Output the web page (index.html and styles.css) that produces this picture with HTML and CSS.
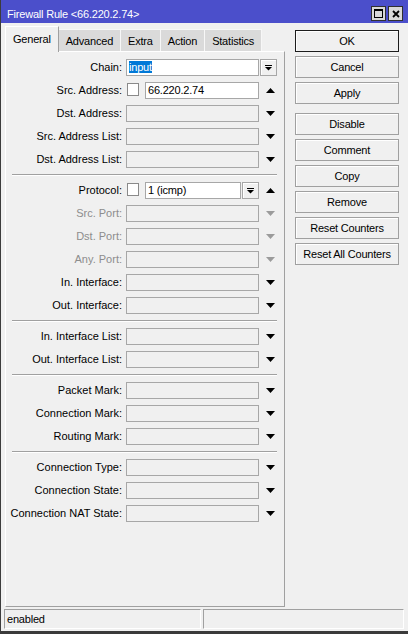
FILE: index.html
```html
<!DOCTYPE html>
<html>
<head>
<meta charset="utf-8">
<title>Firewall Rule</title>
<link rel="stylesheet" href="styles.css">
</head>
<body>
<div class="window">
  <div class="titlebar">
    <span class="title">Firewall Rule &lt;66.220.2.74&gt;</span>
    <div class="tbtns">
      <span class="tbtn"><svg width="9" height="9" viewBox="0 0 9 9"><rect x="0.5" y="0.5" width="8" height="8" fill="none" stroke="#000"/><rect x="0" y="0" width="9" height="2" fill="#000"/></svg></span>
      <span class="tbtn"><svg width="8" height="8" viewBox="0 0 8 8"><path d="M1 1L7 7M7 1L1 7" stroke="#000" stroke-width="1.8"/></svg></span>
    </div>
  </div>
  <div class="main">
    <div class="left">
      <div class="tabs">
        <div class="tab active">General</div>
        <div class="tab">Advanced</div>
        <div class="tab">Extra</div>
        <div class="tab">Action</div>
        <div class="tab">Statistics</div>
      </div>
      <div class="panel">
        <div class="row">
          <span class="lbl">Chain:</span>
          <div class="field"><div class="inp w"><span class="sel">input</span></div></div>
          <div class="side start"><span class="dd"><svg width="7" height="6" viewBox="0 0 7 6"><rect x="0" y="0" width="7" height="1"/><path d="M0 2H7L3.5 5.5Z"/></svg></span></div>
        </div>
        <div class="row">
          <span class="lbl">Src. Address:</span>
          <div class="field"><span class="chk"></span><div class="inp w">66.220.2.74</div></div>
          <div class="side"><svg width="9" height="5" viewBox="0 0 9 5"><path d="M0 5H9L4.5 0Z"/></svg></div>
        </div>
        <div class="row">
          <span class="lbl">Dst. Address:</span>
          <div class="field"><div class="inp"></div></div>
          <div class="side"><svg width="9" height="5" viewBox="0 0 9 5"><path d="M0 0H9L4.5 5Z"/></svg></div>
        </div>
        <div class="row">
          <span class="lbl">Src. Address List:</span>
          <div class="field"><div class="inp"></div></div>
          <div class="side"><svg width="9" height="5" viewBox="0 0 9 5"><path d="M0 0H9L4.5 5Z"/></svg></div>
        </div>
        <div class="row">
          <span class="lbl">Dst. Address List:</span>
          <div class="field"><div class="inp"></div></div>
          <div class="side"><svg width="9" height="5" viewBox="0 0 9 5"><path d="M0 0H9L4.5 5Z"/></svg></div>
        </div>
        <div class="sep"></div>
        <div class="row">
          <span class="lbl">Protocol:</span>
          <div class="field"><span class="chk"></span><div class="inp w">1 (icmp)</div><span class="dd"><svg width="7" height="6" viewBox="0 0 7 6"><rect x="0" y="0" width="7" height="1"/><path d="M0 2H7L3.5 5.5Z"/></svg></span></div>
          <div class="side"><svg width="9" height="5" viewBox="0 0 9 5"><path d="M0 5H9L4.5 0Z"/></svg></div>
        </div>
        <div class="row dis">
          <span class="lbl">Src. Port:</span>
          <div class="field"><div class="inp"></div></div>
          <div class="side"><svg width="9" height="5" viewBox="0 0 9 5"><path d="M0 0H9L4.5 5Z"/></svg></div>
        </div>
        <div class="row dis">
          <span class="lbl">Dst. Port:</span>
          <div class="field"><div class="inp"></div></div>
          <div class="side"><svg width="9" height="5" viewBox="0 0 9 5"><path d="M0 0H9L4.5 5Z"/></svg></div>
        </div>
        <div class="row dis">
          <span class="lbl">Any. Port:</span>
          <div class="field"><div class="inp"></div></div>
          <div class="side"><svg width="9" height="5" viewBox="0 0 9 5"><path d="M0 0H9L4.5 5Z"/></svg></div>
        </div>
        <div class="row">
          <span class="lbl">In. Interface:</span>
          <div class="field"><div class="inp"></div></div>
          <div class="side"><svg width="9" height="5" viewBox="0 0 9 5"><path d="M0 0H9L4.5 5Z"/></svg></div>
        </div>
        <div class="row">
          <span class="lbl">Out. Interface:</span>
          <div class="field"><div class="inp"></div></div>
          <div class="side"><svg width="9" height="5" viewBox="0 0 9 5"><path d="M0 0H9L4.5 5Z"/></svg></div>
        </div>
        <div class="sep"></div>
        <div class="row">
          <span class="lbl">In. Interface List:</span>
          <div class="field"><div class="inp"></div></div>
          <div class="side"><svg width="9" height="5" viewBox="0 0 9 5"><path d="M0 0H9L4.5 5Z"/></svg></div>
        </div>
        <div class="row">
          <span class="lbl">Out. Interface List:</span>
          <div class="field"><div class="inp"></div></div>
          <div class="side"><svg width="9" height="5" viewBox="0 0 9 5"><path d="M0 0H9L4.5 5Z"/></svg></div>
        </div>
        <div class="sep"></div>
        <div class="row">
          <span class="lbl">Packet Mark:</span>
          <div class="field"><div class="inp"></div></div>
          <div class="side"><svg width="9" height="5" viewBox="0 0 9 5"><path d="M0 0H9L4.5 5Z"/></svg></div>
        </div>
        <div class="row">
          <span class="lbl">Connection Mark:</span>
          <div class="field"><div class="inp"></div></div>
          <div class="side"><svg width="9" height="5" viewBox="0 0 9 5"><path d="M0 0H9L4.5 5Z"/></svg></div>
        </div>
        <div class="row">
          <span class="lbl">Routing Mark:</span>
          <div class="field"><div class="inp"></div></div>
          <div class="side"><svg width="9" height="5" viewBox="0 0 9 5"><path d="M0 0H9L4.5 5Z"/></svg></div>
        </div>
        <div class="sep"></div>
        <div class="row">
          <span class="lbl">Connection Type:</span>
          <div class="field"><div class="inp"></div></div>
          <div class="side"><svg width="9" height="5" viewBox="0 0 9 5"><path d="M0 0H9L4.5 5Z"/></svg></div>
        </div>
        <div class="row">
          <span class="lbl">Connection State:</span>
          <div class="field"><div class="inp"></div></div>
          <div class="side"><svg width="9" height="5" viewBox="0 0 9 5"><path d="M0 0H9L4.5 5Z"/></svg></div>
        </div>
        <div class="row">
          <span class="lbl">Connection NAT State:</span>
          <div class="field"><div class="inp"></div></div>
          <div class="side"><svg width="9" height="5" viewBox="0 0 9 5"><path d="M0 0H9L4.5 5Z"/></svg></div>
        </div>
      </div>
    </div>
    <div class="right">
      <div class="btn def">OK</div>
      <div class="btn">Cancel</div>
      <div class="btn">Apply</div>
      <div class="btn gap">Disable</div>
      <div class="btn">Comment</div>
      <div class="btn">Copy</div>
      <div class="btn">Remove</div>
      <div class="btn">Reset Counters</div>
      <div class="btn">Reset All Counters</div>
    </div>
  </div>
  <div class="status">
    <div class="seg seg1">enabled</div>
    <div class="seg seg2"></div>
  </div>
</div>
</body>
</html>
```

FILE: styles.css
```css
* { box-sizing: border-box; }
html, body { margin: 0; padding: 0; }
body {
  background: #f0f0f0;
  font-family: "Liberation Sans", Arial, sans-serif;
  font-size: 11px;
  letter-spacing: -0.2px;
  color: #000;
  width: 408px;
  height: 634px;
  overflow: hidden;
}
.window {
  width: 408px;
  height: 634px;
  border-left: 1px solid #3c3c3c;
  border-bottom: 3px solid #3a3a3a;
  display: flex;
  flex-direction: column;
  background: #f0f0f0;
}
.titlebar {
  height: 23px;
  flex: none;
  background: #4b4fcb;
  color: #fff;
  display: flex;
  justify-content: space-between;
  align-items: flex-start;
  padding: 0 5px 0 6px;
}
.title { padding-top: 8px; line-height: 13px; }
.tbtns { display: flex; gap: 2px; margin-top: 6px; }
.tbtn {
  width: 15px;
  height: 15px;
  border: 1px solid #303030;
  background: #d8d8d8;
  display: flex;
  align-items: center;
  justify-content: center;
}
.main {
  display: flex;
  height: 584px;
  flex: none;
  padding: 3px 0 0 4px;
}
.left { width: 280px; display: flex; flex-direction: column; }
.tabs { display: flex; align-items: flex-end; height: 25px; flex: none; }
.tab {
  height: 22px;
  padding: 5px 7px 0;
  line-height: 13px;
  background: #dadada;
  border-top: 1px solid #f7f7f7;
  border-right: 1px solid #f7f7f7;
  white-space: nowrap;
}
.tab.active {
  height: 26px;
  margin-bottom: -1px;
  padding-top: 6px;
  background: #f0f0f0;
  border-left: 1px solid #fff;
  border-top: 1px solid #fff;
  border-right: 1px solid #a0a0a0;
  position: relative;
  z-index: 1;
}
.panel {
  height: 556px;
  flex: none;
  border: 1px solid;
  border-color: #fff #a0a0a0 #a0a0a0 #fff;
  padding-top: 7px;
  display: flex;
  flex-direction: column;
  gap: 6px;
}
.row { display: flex; align-items: center; height: 17px; line-height: 17px; }
.lbl { width: 116px; text-align: right; margin-right: 4px; white-space: nowrap; letter-spacing: 0; }
.field { width: 133px; height: 17px; display: flex; }
.inp {
  flex: 1;
  height: 17px;
  border: 1px solid #a7a7a7;
  background: #f0f0f0;
  padding-left: 2px;
  line-height: 15px;
  white-space: nowrap;
  overflow: hidden;
}
.inp.w { background: #fff; }
.sel { background: #0078d7; color: #fff; }
.chk {
  width: 12px;
  height: 13px;
  margin: 1px 6px 0 1px;
  align-self: flex-start;
  border: 1px solid #8a8a8a;
  background: #fff;
  flex: none;
}
.dd {
  width: 17px;
  height: 17px;
  margin-left: 1px;
  flex: none;
  border: 1px solid #a7a7a7;
  background: #f0f0f0;
  box-shadow: inset 1px 1px 0 #fff;
  display: flex;
  align-items: center;
  justify-content: center;
}
.side { width: 22px; height: 17px; display: flex; justify-content: center; align-items: center; }
.side.start { justify-content: flex-start; }
.row.dis { color: #8d8d8d; }
.row.dis svg { fill: #9b9b9b; }
.sep {
  height: 2px;
  margin: 0 7px 0 6px;
  border-top: 1px solid #a0a0a0;
  border-bottom: 1px solid #fff;
  flex: none;
}
.right {
  width: 104px;
  margin-left: 10px;
  padding-top: 4px;
  display: flex;
  flex-direction: column;
  gap: 4px;
}
.btn {
  height: 22px;
  border: 1px solid #a0a0a0;
  background: #f0f0f0;
  box-shadow: inset 1px 1px 0 #fff;
  text-align: center;
  padding-top: 1px;
  line-height: 19px;
  white-space: nowrap;
}
.btn.def { border-color: #1c1c1c; }
.btn.gap { margin-top: 5px; }
.status {
  display: flex;
  gap: 2px;
  margin-top: 2px;
  height: 20px;
  padding-left: 3px;
  flex: none;
}
.seg {
  border: 1px solid;
  border-color: #a0a0a0 #fff #fff #a0a0a0;
  line-height: 18px;
  padding-left: 2px;
}
.seg1 { width: 197px; }
.seg2 { width: 201px; }
```
